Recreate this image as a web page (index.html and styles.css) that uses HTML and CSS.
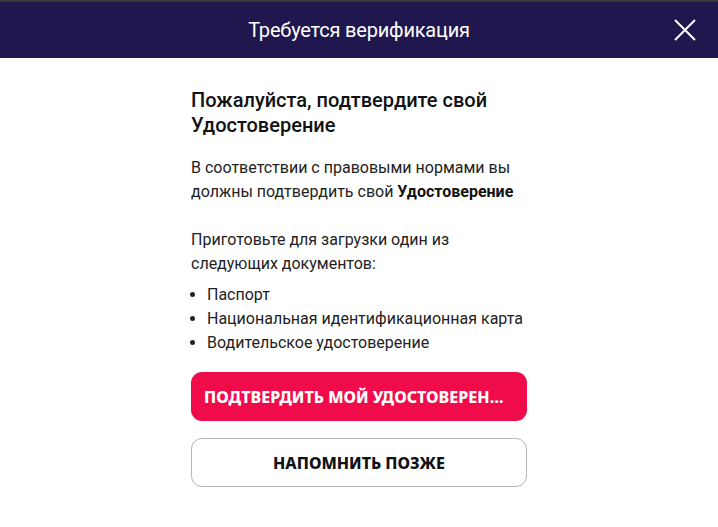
FILE: index.html
```html
<!DOCTYPE html>
<html lang="ru">
<head>
<meta charset="utf-8">
<title>Требуется верификация</title>
<link rel="stylesheet" href="styles.css">
</head>
<body>
<div class="topline"></div>
<header class="header">
  <h1 class="header-title">Требуется верификация</h1>
  <button class="close" aria-label="Закрыть">
    <svg width="22" height="22" viewBox="0 0 22 22"><path d="M1 1L21 21M21 1L1 21" stroke="#fff" stroke-width="2" fill="none"/></svg>
  </button>
</header>
<main class="content">
  <h2 class="title">Пожалуйста, подтвердите свой Удостоверение</h2>
  <p class="text">В соответствии с правовыми нормами вы должны подтвердить свой <b>Удостоверение</b></p>
  <p class="text text-gap">Приготовьте для загрузки один из следующих документов:</p>
  <ul class="list">
    <li>Паспорт</li>
    <li>Национальная идентификационная карта</li>
    <li>Водительское удостоверение</li>
  </ul>
  <div class="actions">
    <button class="btn btn-primary"><span class="btn-label">ПОДТВЕРДИТЬ МОЙ УДОСТОВЕРЕНИЕ</span></button>
    <button class="btn btn-secondary"><span class="btn-label">НАПОМНИТЬ ПОЗЖЕ</span></button>
  </div>
</main>
</body>
</html>
```

FILE: styles.css
```css
* { box-sizing: border-box; }
html, body { margin: 0; padding: 0; background: #fff; }
body { font-family: Roboto, "Noto Sans", sans-serif; color: #1a1a1a; }

.topline { height: 2px; background: #3a3a3a; }

.header {
  height: 56px;
  background: #21174f;
  display: flex;
  align-items: center;
  justify-content: center;
  position: relative;
}
.header-title {
  margin: 0;
  font-family: Roboto, sans-serif;
  font-weight: 400;
  font-size: 20px;
  color: #fff;
  letter-spacing: -0.2px;
}
.close {
  position: absolute;
  right: 22px;
  top: 17px;
  width: 22px;
  height: 22px;
  padding: 0;
  border: 0;
  background: transparent;
  display: flex;
}

.content {
  width: 336px;
  margin: 0 auto;
  padding-top: 30px;
}
.title {
  margin: 0 0 18px;
  font-size: 20px;
  font-weight: 500;
  line-height: 25px;
  color: #111;
}
.text {
  margin: 0;
  font-size: 16px;
  line-height: 24px;
  color: #222;
}
.text b { font-weight: 700; color: #111; }
.text-gap { margin-top: 24px; }

.list {
  margin: 7px 0 0;
  padding: 0 0 0 16px;
  font-size: 16px;
  line-height: 24px;
  color: #222;
}

.actions {
  margin-top: 17px;
  display: flex;
  flex-direction: column;
  gap: 17px;
}
.btn {
  width: 100%;
  height: 49px;
  border-radius: 11px;
  font-family: "Noto Sans", "Open Sans", sans-serif;
  font-weight: 800;
  font-size: 16px;
  padding: 0 13px;
  display: flex;
  align-items: center;
  justify-content: center;
  cursor: pointer;
}
.btn-label {
  white-space: nowrap;
  overflow: hidden;
  text-overflow: ellipsis;
  max-width: 100%;
}
.btn-primary {
  background: #f00c4b;
  border: 0;
  color: #fff;
  justify-content: flex-start;
  padding-right: 22px;
}
.btn-secondary {
  background: #fff;
  border: 1px solid #b5b5b5;
  color: #111;
}
```
